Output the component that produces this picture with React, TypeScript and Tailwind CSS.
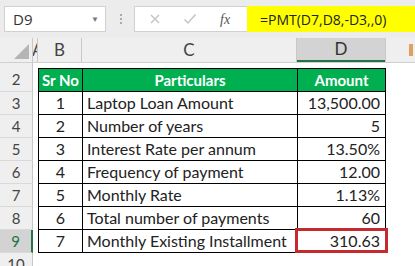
import React from "react";

const rows = [
  { n: 3, sr: "1", label: "Laptop Loan Amount", value: "13,500.00" },
  { n: 4, sr: "2", label: "Number of years", value: "5" },
  { n: 5, sr: "3", label: "Interest Rate per annum", value: "13.50%" },
  { n: 6, sr: "4", label: "Frequency of payment", value: "12.00" },
  { n: 7, sr: "5", label: "Monthly Rate", value: "1.13%" },
  { n: 8, sr: "6", label: "Total number of payments", value: "60" },
  { n: 9, sr: "7", label: "Monthly Existing Installment", value: "310.63" },
];

const cellFont = { fontFamily: "Lato, 'Open Sans', sans-serif" };

function RowHead({ n, active = false, h }: { n: number | string; active?: boolean; h: string }) {
  return (
    <div
      className={`${h} w-[33px] shrink-0 flex items-center justify-center text-[15px] border-b border-[#d9d9d9] ${
        active ? "bg-[#d3d3d3] text-[#217346] border-r-2 border-r-[#217346]" : "bg-[#efefef] text-[#444] border-r border-r-[#c8c8c8]"
      }`}
    >
      {n}
    </div>
  );
}

export default function App() {
  return (
    <div className="w-[415px] h-[266px] overflow-hidden bg-white text-[#222]" style={cellFont}>
      {/* formula bar */}
      <div className="h-[38px] bg-[#ececec] flex items-start pt-[6px]">
        <div className="ml-[4px] w-[102px] h-[26px] bg-white border border-[#d0d0d0] flex items-center pl-[8px] pr-[6px] text-[15px] text-[#333]" style={{ fontFamily: "'Open Sans', sans-serif" }}>
          <span className="flex-1">D9</span>
          <span className="text-[8px] text-[#777]">▼</span>
        </div>
        <div className="ml-[14px] mt-[8px] flex flex-col gap-[2px]">
          <span className="w-[2px] h-[2px] bg-[#aaa]" />
          <span className="w-[2px] h-[2px] bg-[#aaa]" />
          <span className="w-[2px] h-[2px] bg-[#aaa]" />
        </div>
        <div className="ml-[12px] w-[113px] h-[26px] bg-white border border-[#d0d0d0] border-r-0 flex items-center">
          <svg width="12" height="12" viewBox="0 0 12 12" className="ml-[14px]">
            <path d="M2 2L10 10M10 2L2 10" stroke="#c4c4c4" strokeWidth="1.4" />
          </svg>
          <svg width="14" height="12" viewBox="0 0 14 12" className="ml-[22px]">
            <path d="M1.5 6.5L5 10L12.5 1.5" stroke="#c4c4c4" strokeWidth="1.5" fill="none" />
          </svg>
          <span className="ml-[23px] text-[14px] italic text-[#555]" style={{ fontFamily: "'Liberation Serif', serif" }}>
            fx
          </span>
        </div>
        <div className="flex-1 h-[26px] bg-[#ffff00] flex items-center pl-[13px] text-[14px] text-[#222]" style={{ fontFamily: "'Open Sans', sans-serif" }}>
          =PMT(D7,D8,-D3,,0)
        </div>
      </div>

      {/* column headers */}
      <div className="h-[25px] bg-[#efefef] flex text-[17px] text-[#444] border-b border-[#d0d0d0]">
        <div className="w-[33px] shrink-0 border-r border-[#c8c8c8] flex items-end justify-end pr-[3px] pb-[3px]">
          <svg width="15" height="15" viewBox="0 0 15 15">
            <path d="M15 0V15H0Z" fill="#b5b5b5" />
          </svg>
        </div>
        <div className="w-[5px] shrink-0 overflow-hidden border-r border-[#c8c8c8] flex items-center">
          <span className="-ml-[1px]">A</span>
        </div>
        <div className="w-[44px] shrink-0 border-r border-[#c8c8c8] flex items-center justify-center">B</div>
        <div className="w-[215px] shrink-0 border-r border-[#c8c8c8] flex items-center justify-center">C</div>
        <div className="w-[88px] shrink-0 bg-[#d3d3d3] border-b-2 border-[#217346] flex items-center justify-center text-[#333]">D</div>
        <div className="flex-1 border-l border-[#c8c8c8] flex justify-end items-center">
          <span className="w-[4px] h-[12px] bg-[#e0a060] mr-[2px]" />
        </div>
      </div>

      {/* row 1 stripe */}
      <div className="h-[5px] flex">
        <div className="w-[33px] bg-[#efefef] border-r border-[#c8c8c8]" />
      </div>

      {/* row 2 header */}
      <div className="flex">
        <RowHead n={2} h="h-[24px]" />
        <div className="w-[5px] shrink-0" />
        <div className="h-[24px] w-[45px] shrink-0 bg-[#00b050] border border-black flex items-center justify-center text-white font-bold text-[15px]">Sr No</div>
        <div className="h-[24px] w-[215px] shrink-0 bg-[#00b050] border-y border-r border-black flex items-center justify-center text-white font-bold text-[15px]">Particulars</div>
        <div className="h-[24px] w-[88px] shrink-0 bg-[#00b050] border-y border-r border-black flex items-center justify-center text-white font-bold text-[15px]">Amount</div>
      </div>

      {rows.map((r) => (
        <div key={r.n} className="flex">
          <RowHead n={r.n} h="h-[23px]" active={r.n === 9} />
          <div className="w-[5px] shrink-0" />
          <div className="h-[23px] w-[45px] shrink-0 border-x border-b border-black flex items-center justify-center text-[16px]">{r.sr}</div>
          <div className="h-[23px] w-[215px] shrink-0 border-r border-b border-black flex items-center pl-[4px] text-[16px]">{r.label}</div>
          <div className="relative h-[23px] w-[88px] shrink-0 border-r border-b border-black flex items-center justify-end pr-[5px] text-[16px]">
            {r.value}
            {r.n === 9 && <div className="absolute -left-[3px] -top-[2px] -right-[3px] -bottom-[1px] border-[3px] border-[#c62a2f]" />}
          </div>
        </div>
      ))}

      <div className="flex">
        <RowHead n={10} h="h-[23px]" />
      </div>
    </div>
  );
}
